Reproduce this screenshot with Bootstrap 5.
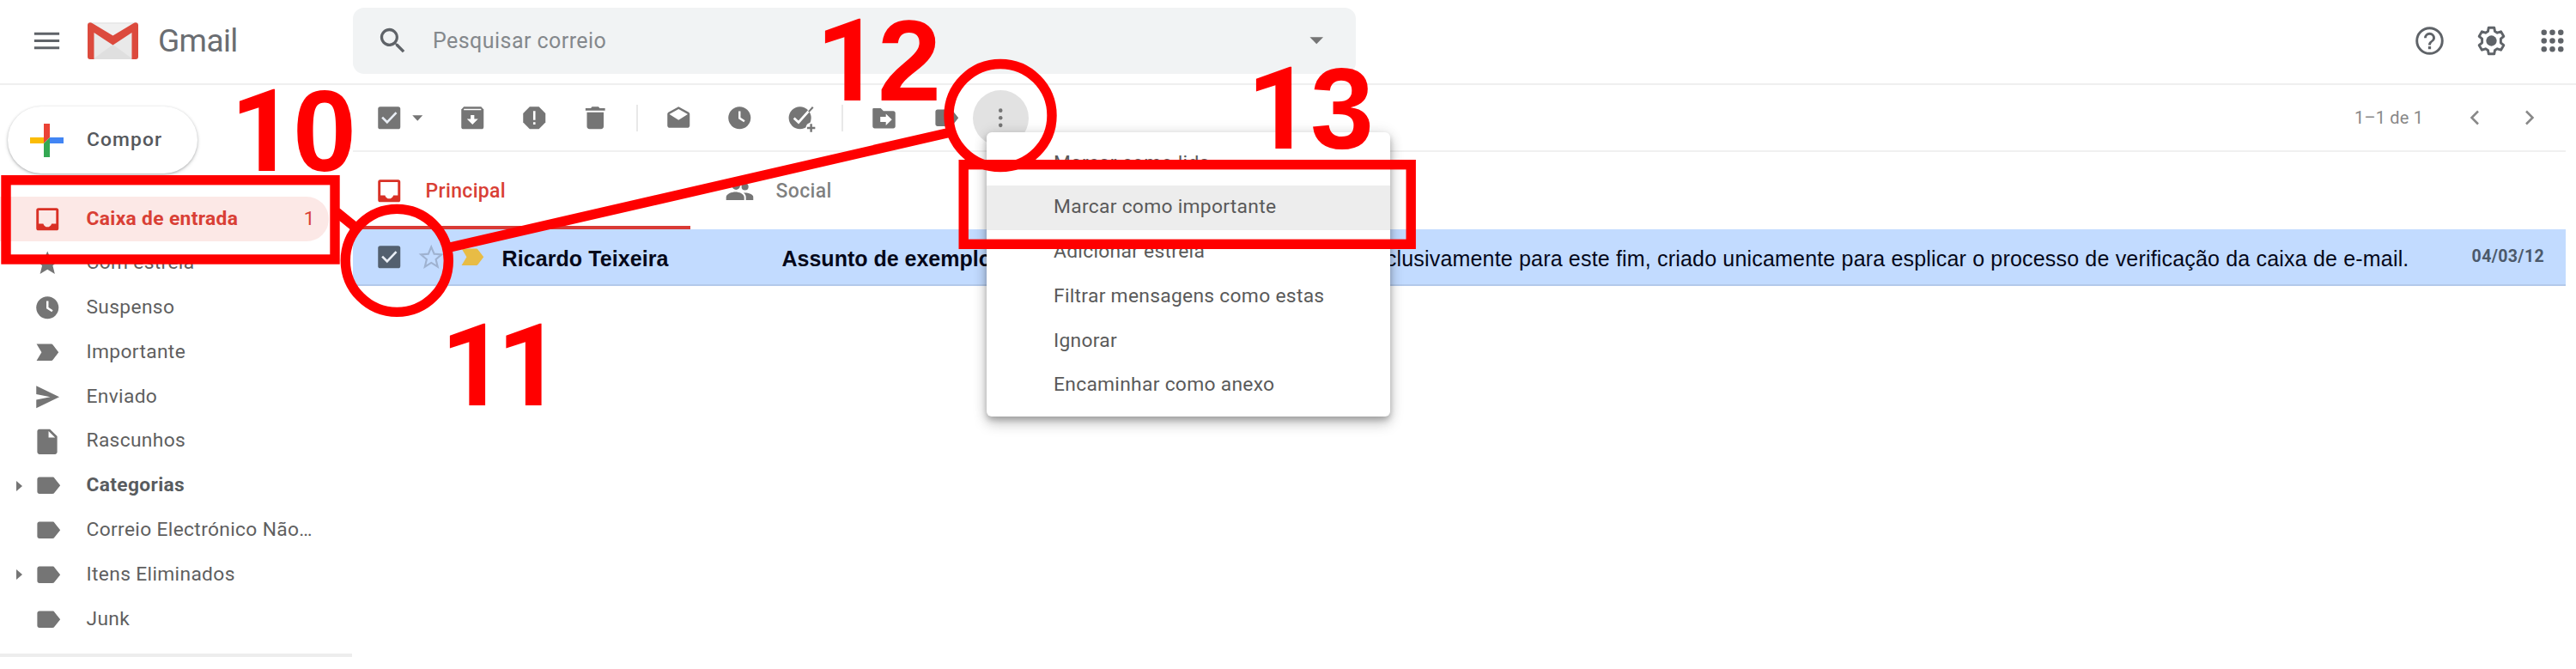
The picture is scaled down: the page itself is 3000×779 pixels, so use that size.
<!DOCTYPE html>
<html lang="pt">
<head>
    <meta charset="UTF-8">
    <meta name="viewport" content="width=device-width, initial-scale=1.0">
    <title>Gmail</title>
    <link href="https://cdn.jsdelivr.net/npm/bootstrap@5.3.0/dist/css/bootstrap.min.css" rel="stylesheet">
    <style>
        body {
            width: 3000px;
            height: 779px;
            overflow: hidden;
            background: #fff;
            color: #5f5f5f;
            font-family: Roboto, "Liberation Sans", sans-serif;
            font-size: 22.8px;
            letter-spacing: .33px;
            line-height: 1;
        }
        svg { display: block; flex: none; }
        .ico { width: 32.5px; height: 32.5px; fill: #757575; }
        .ico-lg { width: 39px; height: 39px; fill: #5f6368; }
        .text-gred { color: #d93f35; }
        .ico.red { fill: #d93025; }
        .ico.slate { fill: #53606f; }
        .ico.gold { fill: #e8bc45; }

        /* top bar */
        .topbar { height: 99px; border-bottom: 2px solid #efefef; padding: 0 8px 2px 35px; }
        .logo { width: 59px; height: 43px; margin-left: 28px; }
        .wordmark { width: 250px; padding-left: 23px; font-size: 37px; letter-spacing: -.6px; color: #6a6d71; }
        .searchbox { width: 1168px; height: 77px; border-radius: 13px; background: #f1f3f4; padding: 0 30px 0 27px; }
        .searchbox span { margin-left: 27px; font-size: 25px; letter-spacing: .45px; color: #84888c; }
        .top-icons { gap: 32.4px; }

        /* sidebar */
        .sidebar { width: 411px; height: 680px; padding-top: 25px; }
        .compose { width: 221px; height: 78px; margin: 0 0 27px 9px; padding-left: 26px; border-radius: 39px; background: #fff;
            box-shadow: 0 1px 3px rgba(60, 64, 67, .35), 0 2px 5px rgba(60, 64, 67, .12); color: #55585c; font-weight: 500; }
        .compose span { margin-left: 27px; letter-spacing: 1.1px; }
        .folder { height: 51.8px; width: 383px; padding-right: 16px; }
        .folder.current { background: #fce8e6; border-radius: 0 26px 26px 0; font-weight: 700; }
        .folder .caret { width: 39px; padding-left: 19px; }
        .folder .name { padding-left: 29px; }
        .side-end { height: 4px; width: 410px; background: #ededed; margin-top: 14px; }

        /* message pane */
        .pane { width: 2577px; }
        .toolbar { height: 78px; border-bottom: 2px solid #f0f0f0; padding-left: 26px; }
        .tools { gap: 39px; }
        .tools.first { margin-left: 32px; }
        .divider { width: 2px; height: 31px; background: #e8e8e8; margin: 0 31px; }
        .more-btn { width: 65px; height: 65px; background: #e2e2e2; margin-left: 16px; }
        .pager { gap: 32px; font-size: 20px; letter-spacing: .2px; color: #888; padding-right: 26px; }
        .pager .range { width: 92px; }
        .tab-item { height: 90px; width: 408px; padding-left: 26px; font-weight: 500; }
        .tab-item span { margin-left: 26px; font-size: 23px; }
        .tab-item.active-tab { width: 393px; border-bottom: 4px solid #d93a35; margin-right: 15px; padding-top: 4px; }
        .mail-row { height: 66px; background: #c2dbff; border-bottom: 2px solid #b3c9ea; padding-left: 26px; font-family: "Liberation Sans", Arial, sans-serif;
            font-size: 25px; letter-spacing: 0; color: #05081a; white-space: nowrap; }
        .mail-row .sender { width: 326px; margin-left: 18px; padding-top: 4px; letter-spacing: .08px; }
        .mail-row .snippet { width: 1895px; padding-top: 4px; }
        .mail-row .preview { letter-spacing: .18px; }
        .mail-row .date { font-family: Roboto, sans-serif; font-size: 19.5px; color: #4c596b; padding: 0 25px 0 0; letter-spacing: .35px; }

        /* menu laid over the message list */
        .more-menu { position: absolute; left: 1149px; top: 154px; width: 470px; height: 331px; padding: 10px 0; background: #fff; border-radius: 6px;
            box-shadow: 0 8px 16px rgba(0, 0, 0, .22), 0 4px 6px rgba(0, 0, 0, .18), 0 0 16px rgba(0, 0, 0, .1); color: #5a5a5a; letter-spacing: .3px; }
        .more-menu div { height: 51.8px; padding-left: 78px; }
        .more-menu .hover { background: #ededed; }

        .notes { position: absolute; left: 0; top: 0; }
        .notes text { font: 700 133px "Liberation Sans", Arial, sans-serif; letter-spacing: 0; fill: #f00; }
        .notes .one { font-family: Roboto, sans-serif; }
    </style>
</head>
<body class="position-relative">
    <svg width="0" height="0" class="position-absolute">
        <symbol id="inbox" viewBox="0 0 20 20"><path fill-rule="evenodd" d="M3.600 2h12.800A1.600 1.600 0 0 1 18 3.600v12.800a1.600 1.600 0 0 1-1.600 1.600H3.600A1.600 1.600 0 0 1 2 16.400V3.600A1.600 1.600 0 0 1 3.600 2zM3.800 3.700v9.500h3.200c.5 1.500 1.600 2.400 3 2.400s2.500-.9 3-2.400h3.200V3.700z"/></symbol>
        <symbol id="check" viewBox="0 0 20 20"><rect x="2" y="2" width="16" height="16" rx="1.600"/><path d="M5 9.600l3.500 3.500 6.600-6.900" fill="none" stroke="#e9eef5" stroke-width="1.600"/></symbol>
        <symbol id="star" viewBox="0 0 20 20"><path d="M10 1.500l2.400 5.800 6.100.5-4.700 4 1.500 6.100-5.300-3.300-5.300 3.300 1.500-6.100-4.700-4 6.100-.5z"/></symbol>
        <symbol id="clock" viewBox="0 0 20 20"><circle cx="10" cy="10" r="8"/><path d="M10 5.200v5l3.500 2.300" fill="none" stroke="#fff" stroke-width="1.500"/></symbol>
        <symbol id="important" viewBox="0 0 20 20"><path d="M2.200 4h10.300c.6 0 1.200.3 1.500.8L18 10l-4 5.200c-.3.500-.9.800-1.500.8H2.200l3.600-6z"/></symbol>
        <symbol id="send" viewBox="0 0 20 20"><path d="M2 2l16.500 8L2 18v-6l10-2-10-2z"/></symbol>
        <symbol id="doc" viewBox="0 0 20 20"><path fill-rule="evenodd" d="M4.200 1h7.600L17 6.200v11.200c0 .9-.7 1.600-1.600 1.600H4.300c-.9 0-1.600-.7-1.600-1.600V2.600C2.700 1.700 3.400 1 4.200 1zm6.600 1.500V7h4.700z"/></symbol>
        <symbol id="tag" viewBox="0 0 20 20"><path d="M4.200 4h9.500c.6 0 1 .2 1.300.7L19.200 10 15 15.300c-.3.500-.7.700-1.300.7H4.200c-.8 0-1.500-.7-1.500-1.500v-9C2.700 4.700 3.400 4 4.200 4z"/></symbol>
        <symbol id="down" viewBox="0 0 20 20"><path d="M6.300 8.200h7.400l-3.700 4z"/></symbol>
        <symbol id="archive" viewBox="0 0 20 20"><path d="M3.800 2h12.400L18 4v12.400a1.600 1.600 0 0 1-1.600 1.600H3.600A1.600 1.600 0 0 1 2 16.400V4z"/><path d="M3.800 3.500h12.400v1H3.800zM8.700 8h2.600v2.800h2.700l-4 4-4-4h2.700z" fill="#fff"/></symbol>
        <symbol id="spam" viewBox="0 0 20 20"><path d="M6.700 2h6.600L18 6.700v6.600L13.300 18H6.700L2 13.300V6.700z"/><path d="M9.200 5h1.600v6.500H9.200zm0 8h1.600v1.800H9.200z" fill="#fff"/></symbol>
        <symbol id="trash" viewBox="0 0 20 20"><path d="M3 3h3.800l.9-1h4.600l.9 1H17v1.800H3zm1 3h12v10.200c0 1-.8 1.800-1.800 1.800H5.800c-1 0-1.800-.8-1.800-1.800z"/></symbol>
        <symbol id="mail-open" viewBox="0 0 20 20"><path fill-rule="evenodd" d="M10 2l7.300 4c.4.300.7.800.7 1.300v8.200c0 .9-.7 1.600-1.600 1.600H3.600c-.9 0-1.600-.7-1.600-1.600V7.300c0-.5.300-1 .7-1.300zm0 1.700L3.400 7.400 10 11.600l6.600-4.200z"/></symbol>
        <symbol id="move" viewBox="0 0 20 20"><path d="M2.500 3h5.300l2 2h7c.9 0 1.500.6 1.500 1.500V16c0 .9-.6 1.500-1.500 1.500H3.500c-.9 0-1.500-.6-1.500-1.500V4.500C2 3.700 2 3 2.500 3z"/><path d="M7.500 9.300h4V7l4.300 4.200-4.300 4.200v-2.500h-4z" fill="#fff"/></symbol>
        <symbol id="people" viewBox="0 0 24 24"><path d="M16.700 11.500a3 3 0 1 0 0-6 3 3 0 0 0 0 6zM9 11a3.500 3.500 0 1 0 0-7 3.500 3.500 0 0 0 0 7zm7.700 2.600l-1.300.1c1.400 1 2.100 2.200 2.100 3.800V20H24v-2.500c0-2.600-4.500-3.900-7.300-3.900zM8.500 13C5.500 13 .5 14.500.5 17.500V20h15.500v-2.500c0-3-4.600-4.500-7.500-4.500z"/></symbol>
    </svg>

    <header class="topbar d-flex align-items-center">
        <svg class="ico-lg" viewBox="0 0 24 24"><path d="M3 6h18v1.800H3zm0 5.100h18v1.800H3zm0 5.100h18V18H3z"/></svg>
        <svg class="logo" viewBox="0 0 59 43">
            <rect width="59" height="43" rx="3" fill="#e9e9e9"/>
            <path d="M6 43l23.500-17L53 43z" fill="#dfdfdf"/>
            <path d="M6 2h47L29.500 19z" fill="#f0f0f0"/>
            <path d="M3 43a3 3 0 0 1-3-3V3.500C0 .5 3-.5 5.400 1L29.500 15.500 53.600 1C56-.5 59 .5 59 3.500V40a3 3 0 0 1-3 3h-4.500V12L29.500 26.500 7.500 12V43z" fill="#dc4a3d"/>
        </svg>
        <span class="wordmark">Gmail</span>
        <div class="searchbox d-flex align-items-center">
            <svg class="ico-lg" viewBox="0 0 24 24"><path d="M15.500 14h-.8l-.3-.3A6.500 6.500 0 1 0 13.700 14.400l.3.300v.8l5 5 1.500-1.500zm-6 0a4.500 4.500 0 1 1 0-9 4.500 4.500 0 0 1 0 9z"/></svg>
            <span>Pesquisar correio</span>
            <svg class="ico ms-auto" viewBox="0 0 20 20"><path d="M5.200 7.500h9.600l-4.800 5z"/></svg>
        </div>
        <div class="top-icons d-flex ms-auto">
            <svg class="ico-lg" viewBox="0 0 24 24"><path d="M11 18h2v-2h-2zm1-16a10 10 0 1 0 0 20 10 10 0 0 0 0-20zm0 18.200a8.200 8.200 0 1 1 0-16.400 8.200 8.200 0 0 1 0 16.400zM12 6a4 4 0 0 0-4 4h1.800a2.200 2.200 0 0 1 4.400 0c0 2-3.100 1.900-3.100 5h1.800c0-2.200 3.100-2.500 3.100-5a4 4 0 0 0-4-4z"/></svg>
            <svg class="ico-lg" viewBox="0 0 24 24"><path d="M10 2.600h4l.5 2.700 1.700 1 2.600-.9 2 3.400-2.100 1.800v2.800l2.100 1.800-2 3.400-2.600-.9-1.700 1-.5 2.700h-4l-.5-2.700-1.700-1-2.600.9-2-3.400 2.100-1.800v-2.800L3.200 8.800l2-3.400 2.600.9 1.700-1z" fill="none" stroke="#5f6368" stroke-width="1.800" stroke-linejoin="round"/><circle cx="12" cy="12" r="3.800"/></svg>
            <svg class="ico-lg" viewBox="0 0 24 24"><circle cx="6" cy="6" r="2"/><circle cx="12" cy="6" r="2"/><circle cx="18" cy="6" r="2"/><circle cx="6" cy="12" r="2"/><circle cx="12" cy="12" r="2"/><circle cx="18" cy="12" r="2"/><circle cx="6" cy="18" r="2"/><circle cx="12" cy="18" r="2"/><circle cx="18" cy="18" r="2"/></svg>
        </div>
    </header>

    <main class="d-flex">
        <nav class="sidebar">
            <div class="compose d-flex align-items-center">
                <svg width="39" height="39" viewBox="0 0 39 39"><path d="M16 0h7v16l-7 7z" fill="#ea4335"/><path d="M0 16h16v7H0z" fill="#fbbc05"/><path d="M23 16h16v7H23z" fill="#4285f4"/><path d="M16 23l7-7v23h-7z" fill="#34a853"/></svg>
                <span>Compor</span>
            </div>
            <div class="folder current text-gred d-flex align-items-center">
                <span class="caret"></span><svg class="ico red"><use href="#inbox"/></svg>
                <span class="name">Caixa de entrada</span><span class="ms-auto fw-normal">1</span>
            </div>
            <div class="folder d-flex align-items-center">
                <span class="caret"></span><svg class="ico"><use href="#star"/></svg><span class="name">Com estrela</span>
            </div>
            <div class="folder d-flex align-items-center">
                <span class="caret"></span><svg class="ico"><use href="#clock"/></svg><span class="name">Suspenso</span>
            </div>
            <div class="folder d-flex align-items-center">
                <span class="caret"></span><svg class="ico"><use href="#important"/></svg><span class="name">Importante</span>
            </div>
            <div class="folder d-flex align-items-center">
                <span class="caret"></span><svg class="ico"><use href="#send"/></svg><span class="name">Enviado</span>
            </div>
            <div class="folder d-flex align-items-center">
                <span class="caret"></span><svg class="ico"><use href="#doc"/></svg><span class="name">Rascunhos</span>
            </div>
            <div class="folder d-flex align-items-center">
                <span class="caret"><svg width="7" height="12"><path d="M0 0l7 6-7 6z" fill="#757575"/></svg></span><svg class="ico"><use href="#tag"/></svg><span class="name fw-bold text-dark text-opacity-75">Categorias</span>
            </div>
            <div class="folder d-flex align-items-center">
                <span class="caret"></span><svg class="ico"><use href="#tag"/></svg><span class="name">Correio Electrónico Não…</span>
            </div>
            <div class="folder d-flex align-items-center">
                <span class="caret"><svg width="7" height="12"><path d="M0 0l7 6-7 6z" fill="#757575"/></svg></span><svg class="ico"><use href="#tag"/></svg><span class="name">Itens Eliminados</span>
            </div>
            <div class="folder d-flex align-items-center">
                <span class="caret"></span><svg class="ico"><use href="#tag"/></svg><span class="name">Junk</span>
            </div>
            <div class="side-end"></div>
        </nav>

        <section class="pane">
            <div class="toolbar d-flex align-items-center">
                <svg class="ico"><use href="#check"/></svg>
                <svg class="ico"><use href="#down"/></svg>
                <div class="tools first d-flex">
                    <svg class="ico"><use href="#archive"/></svg>
                    <svg class="ico"><use href="#spam"/></svg>
                    <svg class="ico"><use href="#trash"/></svg>
                </div>
                <div class="divider"></div>
                <div class="tools d-flex">
                    <svg class="ico"><use href="#mail-open"/></svg>
                    <svg class="ico"><use href="#clock"/></svg>
                    <svg class="ico overflow-visible" viewBox="0 0 20 20">
                        <circle cx="9" cy="10" r="8"/>
                        <path d="M4.700 10.200l3.300 3 9-10" fill="none" stroke="#fff" stroke-width="1.700"/>
                        <path d="M15.300 5.600l3-3.300" stroke="#757575" stroke-width="1.300"/>
                        <circle cx="17" cy="17.200" r="3.800" fill="#fff"/>
                        <path d="M17 14.300v5.800M14.100 17.200h5.800" stroke="#757575" stroke-width="1.500"/>
                    </svg>
                </div>
                <div class="divider"></div>
                <div class="tools d-flex">
                    <svg class="ico"><use href="#move"/></svg>
                    <svg class="ico"><use href="#tag"/></svg>
                </div>
                <div class="more-btn rounded-circle d-flex align-items-center justify-content-center">
                    <svg class="ico" viewBox="0 0 20 20"><circle cx="10" cy="4.700" r="1.400"/><circle cx="10" cy="10" r="1.400"/><circle cx="10" cy="15.300" r="1.400"/></svg>
                </div>
                <div class="pager d-flex align-items-center ms-auto">
                    <span class="range">1–1 de 1</span>
                    <svg width="32" height="32" viewBox="0 0 32 32"><path d="M20 8.500L12.500 16l7.500 7.500" fill="none" stroke="#888" stroke-width="2.500"/></svg>
                    <svg width="32" height="32" viewBox="0 0 32 32"><path d="M12 8.500l7.500 7.500-7.500 7.500" fill="none" stroke="#888" stroke-width="2.500"/></svg>
                </div>
            </div>
            <div class="d-flex">
                <div class="tab-item active-tab text-gred d-flex align-items-center">
                    <svg class="ico red"><use href="#inbox"/></svg><span>Principal</span>
                </div>
                <div class="tab-item d-flex align-items-center text-black-50">
                    <svg class="ico"><use href="#people"/></svg><span>Social</span>
                </div>
            </div>
            <div class="mail-row d-flex align-items-center">
                <svg class="ico slate"><use href="#check"/></svg>
                <svg class="ico ms-3" viewBox="0 0 20 20"><path d="M10 2.800l2.100 5 5.300.4-4.100 3.500 1.300 5.300-4.600-2.900L5.400 17l1.300-5.300-4.100-3.500 5.300-.4z" fill="none" stroke="#9fb2d0" stroke-width="1.300"/></svg>
                <svg class="ico gold ms-3"><use href="#important"/></svg>
                <span class="sender fw-bold">Ricardo Teixeira</span>
                <div class="snippet d-flex justify-content-between">
                    <span class="fw-bold">Assunto de exemplo</span>
                    <span class="preview">exclusivamente para este fim, criado unicamente para esplicar o processo de verificação da caixa de e-mail.</span>
                </div>
                <span class="date fw-bold ms-auto">04/03/12</span>
            </div>
        </section>
    </main>

    <div class="more-menu">
        <div class="d-flex align-items-center">Marcar como lida</div>
        <div class="hover d-flex align-items-center">Marcar como importante</div>
        <div class="d-flex align-items-center">Adicionar estrela</div>
        <div class="d-flex align-items-center">Filtrar mensagens como estas</div>
        <div class="d-flex align-items-center">Ignorar</div>
        <div class="d-flex align-items-center">Encaminhar como anexo</div>
    </div>

    <!-- numbered steps drawn over the mailbox -->
    <svg class="notes" width="3000" height="779">
        <g fill="none" stroke="#f00" stroke-width="11.400">
            <rect x="7" y="209.700" width="383" height="92.300"/>
            <rect x="1122.200" y="191.700" width="521" height="92.600"/>
            <circle cx="462.300" cy="303.400" r="60"/>
            <circle cx="1165" cy="134.500" r="60"/>
            <path d="M392 247l21 17M524 288l581-133.500"/>
        </g>
        <text y="199"><tspan class="one" x="268">1</tspan><tspan x="341">0</tspan></text>
        <text y="472"><tspan class="one" x="513">1</tspan><tspan class="one" x="578.500">1</tspan></text>
        <text y="116.500"><tspan class="one" x="950">1</tspan><tspan x="1022">2</tspan></text>
        <text y="173"><tspan class="one" x="1452">1</tspan><tspan x="1526">3</tspan></text>
    </svg>
    <script src="https://cdn.jsdelivr.net/npm/bootstrap@5.3.0/dist/js/bootstrap.bundle.min.js"></script>
</body>
</html>
